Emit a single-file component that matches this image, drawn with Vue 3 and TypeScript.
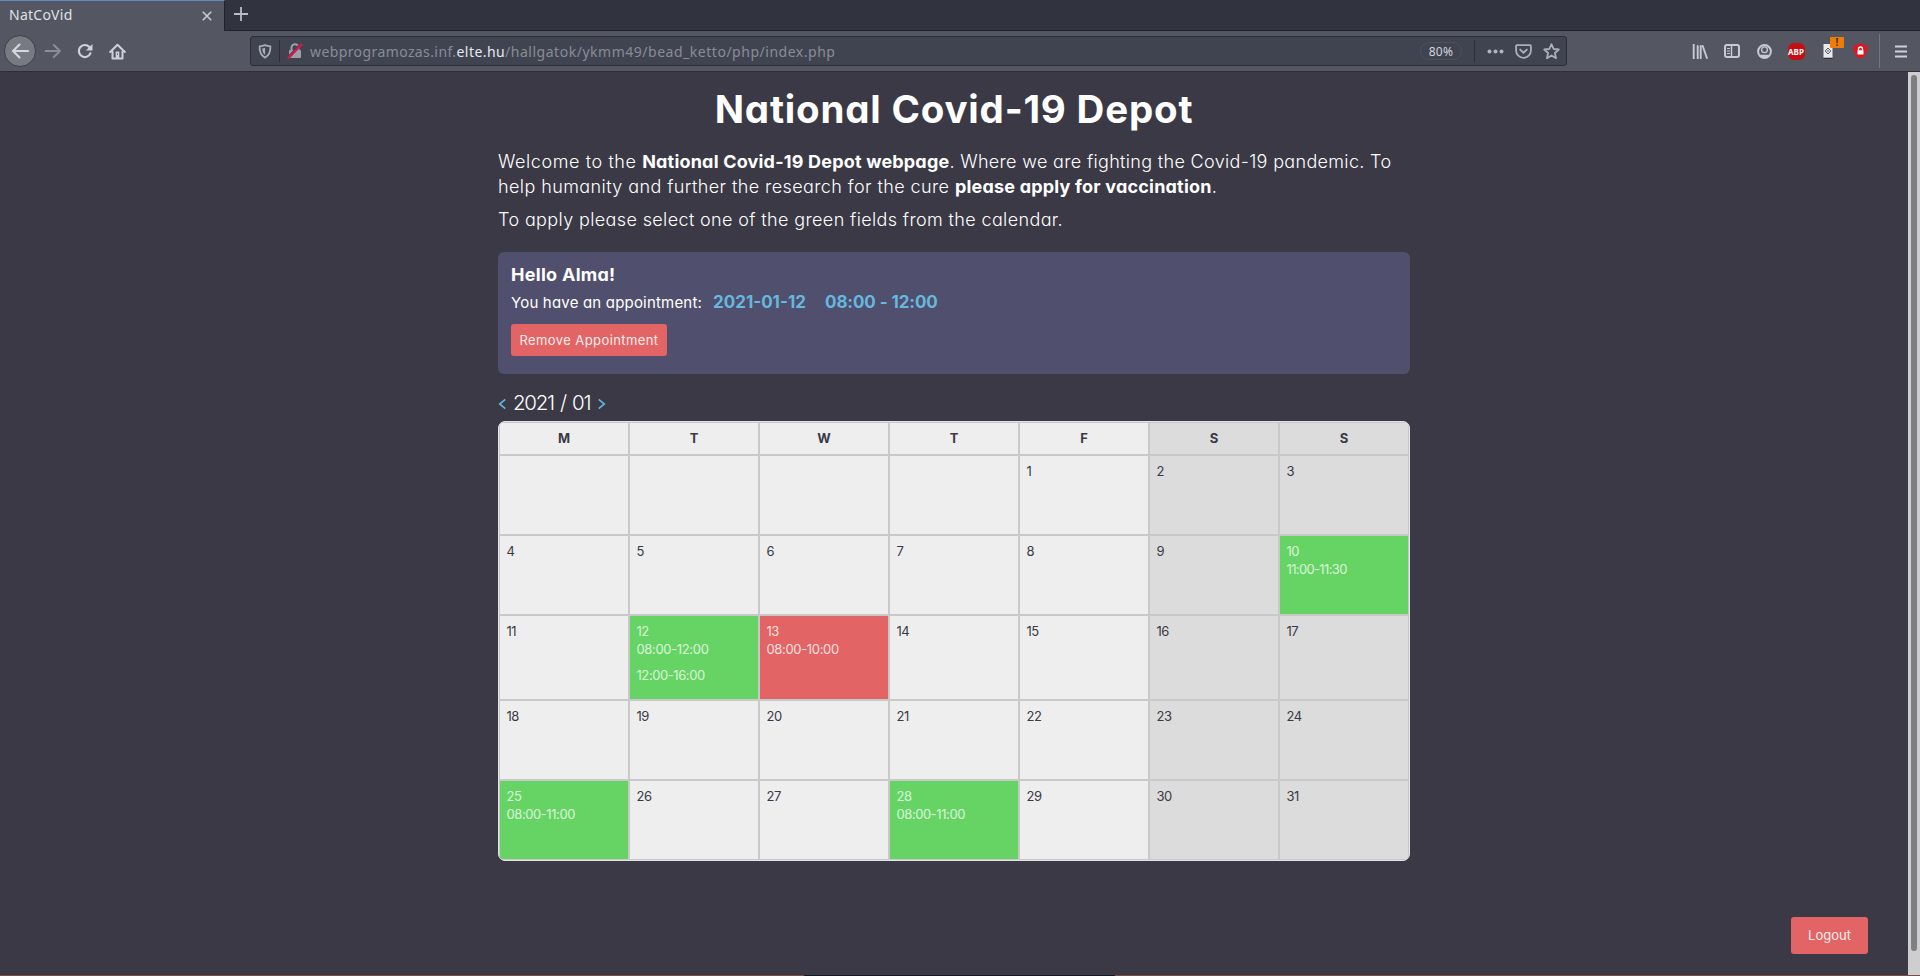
<script setup lang="ts">
interface Cell {
  day: string
  times: { label: string; key: string }[]
  kind: 'plain' | 'weekend' | 'free' | 'full'
}

const weekdays: string[] = ['M', 'T', 'W', 'T', 'F', 'S', 'S']

const slots: Record<number, { kind: 'free' | 'full'; times: string[] }> = {
  10: { kind: 'free', times: ['11:00-11:30'] },
  12: { kind: 'free', times: ['08:00-12:00', '12:00-16:00'] },
  13: { kind: 'full', times: ['08:00-10:00'] },
  25: { kind: 'free', times: ['08:00-11:00'] },
  28: { kind: 'free', times: ['08:00-11:00'] },
}

const FIRST_WEEKDAY = 4
const cells: Cell[] = Array.from({ length: 35 }, (_, i) => {
  const day = i - FIRST_WEEKDAY + 1
  const slot = slots[day]
  return {
    day: day > 0 ? String(day) : '',
    times: (slot?.times ?? []).map((label) => {
      const ones = (label.match(/1/g) ?? []).length
      return { label, key: ones > 3 ? 'tightest' : ones > 1 ? 'tighter' : 'tight' }
    }),
    kind: slot ? slot.kind : i % 7 > 4 ? 'weekend' : 'plain',
  }
})
</script>

<template>
  <div class="window">
    <div class="tabbar">
      <div class="tab">
        <span class="tab-title">NatCoVid</span>
        <svg class="tab-close" width="10" height="10" viewBox="0 0 10 10"><path d="M.8.8l8.4 8.4M9.2.8L.8 9.2" stroke="#c9ccd4" stroke-width="1.6" fill="none" /></svg>
      </div>
      <svg class="tab-new" width="14" height="14" viewBox="0 0 14 14"><path d="M7 0v14M0 7h14" stroke="#b9bcc4" stroke-width="1.800" fill="none" /></svg>
    </div>

    <div class="toolbar">
      <div class="nav">
        <span class="back"><svg width="18" height="16" viewBox="0 0 18 16"><path d="M17 8H2.500M8.500 1.600L2 8l6.500 6.400" fill="none" stroke="#d3d7df" stroke-width="2.100" stroke-linecap="round" stroke-linejoin="round" /></svg></span>
        <span class="slot"><svg width="18" height="16" viewBox="0 0 18 16"><path d="M1.500 8h14M9.800 2L16 8l-6.200 6" fill="none" stroke="#8a8e97" stroke-width="1.900" stroke-linecap="round" stroke-linejoin="round" /></svg></span>
        <span class="slot"><svg width="16" height="16" viewBox="0 0 16 16"><path d="M13.400 10.300A6 6 0 1 1 12.300 4" fill="none" stroke="#cdd1d9" stroke-width="2.200" stroke-linecap="round" /><path d="M15.500 .9v6.600H8.900z" fill="#cdd1d9" /></svg></span>
        <span class="slot"><svg width="17" height="17" viewBox="0 0 17 17"><path d="M1.200 9L8.500 1.700 15.800 9" fill="none" stroke="#cdd1d9" stroke-width="2" stroke-linecap="round" stroke-linejoin="round" /><path d="M3.500 8v7.400h10V8" fill="none" stroke="#cdd1d9" stroke-width="2" stroke-linejoin="round" /><path d="M6.700 8.500h3.600V15H6.700z" fill="#cdd1d9" /><path d="M8 10.500h1v1.300H8z" fill="#545762" /></svg></span>
      </div>

      <div class="urlbar">
        <svg class="shield" width="14" height="15" viewBox="0 0 14 15"><path d="M7 1.200c2 .8 3.700 1 5.400 1.100.2 5.200-1 9-5.400 11.400C2.600 11.300 1.400 7.500 1.600 2.300 3.300 2.200 5 2 7 1.200z" fill="none" stroke="#a9adb7" stroke-width="1.800" stroke-linejoin="round" /><path d="M7.100 3.800v7.200C5.200 9.300 4.300 7.400 4.200 4.500 5.200 4.400 6 4.200 7.100 3.800z" fill="#a9adb7" /></svg>
        <i class="sep"></i>
        <svg class="lock" width="16" height="16" viewBox="0 0 16 16"><path d="M4.500 8V4.700a3.500 3.500 0 0 1 7 0V8" fill="none" stroke="#9b9fa9" stroke-width="2" /><rect x="2" y="7" width="12" height="8" rx="1" fill="#9b9fa9" /><path d="M1.600 13.200L13 1.200" stroke="#404450" stroke-width="1.500" /><path d="M1.600 14.800L14.200 1.600" stroke="#d0194a" stroke-width="2.400" stroke-linecap="round" /></svg>
        <span class="url"><span class="u1">webprogramozas.inf.</span><span class="u2">elte.hu</span><span class="u3">/hallgatok/ykmm49/bead_ketto/php/index.php</span></span>
        <span class="zoom-level">80%</span>
        <i class="sep"></i>
        <svg class="dots" width="17" height="5" viewBox="0 0 17 5"><g fill="#b0b4bd"><circle cx="2.500" cy="2.500" r="2" /><circle cx="8.500" cy="2.500" r="2" /><circle cx="14.500" cy="2.500" r="2" /></g></svg>
        <svg class="pocket" width="17" height="15" viewBox="0 0 17 15"><path d="M1.800 1.200h13.400c.4 0 .7.300.7.700v4.600a7.400 7.400 0 0 1-14.800 0V1.900c0-.4.300-.7.700-.7z" fill="none" stroke="#abafb9" stroke-width="1.800" /><path d="M5.200 5.600l3.300 3.100 3.300-3.100" fill="none" stroke="#abafb9" stroke-width="1.900" stroke-linecap="round" stroke-linejoin="round" /></svg>
        <svg class="star" width="17" height="17" viewBox="0 0 17 17"><path d="M8.500 1.200l2.150 4.800 5.150.5-3.900 3.500 1.150 5.200-4.550-2.700-4.550 2.700L5.100 10 1.200 6.500l5.150-.5z" fill="none" stroke="#abafb9" stroke-width="1.800" stroke-linejoin="round" /></svg>
      </div>

      <div class="tools">
        <span class="slot"><svg width="16" height="15" viewBox="0 0 16 15"><path d="M1.700.5v14M5.700 2v12.500M8.700 2v12.500M10.700 2l4.200 12" stroke="#c6cad3" stroke-width="1.900" fill="none" stroke-linecap="round" /></svg></span>
        <span class="slot"><svg width="16" height="14" viewBox="0 0 16 14"><rect x="1" y="1" width="14" height="12" rx="2" fill="none" stroke="#c6cad3" stroke-width="2" /><path d="M7.500 1v12" stroke="#c6cad3" stroke-width="1.500" /><path d="M3 4.500h3M3 7h3M3 9.500h3" stroke="#c6cad3" stroke-width="1" /></svg></span>
        <span class="slot"><svg width="15" height="15" viewBox="0 0 15 15"><circle cx="7.500" cy="7.500" r="6.400" fill="none" stroke="#c6cad3" stroke-width="2" /><circle cx="7.500" cy="5.800" r="2.900" fill="none" stroke="#c6cad3" stroke-width="1.300" /><path d="M2.500 10.800h10c-1 2-3 3.200-5 3.200s-4-1.200-5-3.200z" fill="#c6cad3" /></svg></span>
        <span class="slot"><span class="abp">ABP</span></span>
        <span class="slot ext"><svg width="10" height="16" viewBox="0 0 10 16"><path d="M.5 1h9v14h-9z" fill="#e9eaec" /><path d="M.5 15.300h9" stroke="#2c2f38" stroke-width="1.200" /><path d="M5 5L7.800 8 5 11 2.200 8z" fill="none" stroke="#585c66" stroke-width="1" /><path d="M4 8h2" stroke="#585c66" /></svg><span class="badge">!</span></span>
        <span class="slot"><svg width="15" height="16" viewBox="0 0 15 16"><path d="M7.500.3c2 1.300 4.300 2 6.900 2.100.4 6-1.300 10.700-6.900 13.300C1.900 13.100.2 8.400.6 2.400 3.200 2.300 5.500 1.600 7.500.3z" fill="#e4141f" /><path d="M5.500 7.500V6a2 2 0 0 1 4 0v1.500" fill="none" stroke="#fff" stroke-width="1.300" /><rect x="4.500" y="7.200" width="6" height="4.300" rx=".5" fill="#fff" /></svg></span>
        <i class="tools-sep"></i>
        <svg class="menu" width="12" height="13" viewBox="0 0 12 13"><path d="M0 1.500h12M0 6.500h12M0 11.500h12" stroke="#cdd1d9" stroke-width="2" /></svg>
      </div>
    </div>

    <div class="viewport">
      <main class="page">
        <h1>National Covid-19 Depot</h1>
        <p class="lead">
          <span class="row"><span class="w1">Welcome to the </span><b class="w2">National Covid-19 Depot webpage</b><span class="w3">. Where we are fighting the Covid-19 pandemic. To</span></span>
          <span class="row"><span class="w4">help humanity and further the research for the cure </span><b class="w5">please apply for vaccination</b>.</span>
        </p>
        <p class="lead"><span class="row w6">To apply please select one of the green fields from the calendar.</span></p>

        <section class="card">
          <h2>Hello Alma!</h2>
          <div class="appointment">
            <span class="label">You have an appointment:</span>
            <b class="date">2021-01-12</b>
            <b class="time">08:00 - 12:00</b>
          </div>
          <button class="remove">Remove Appointment</button>
        </section>

        <div class="month">
          <svg width="8" height="12" viewBox="0 0 8 12"><path d="M7.300 1.300L1.700 6l5.600 4.700" /></svg>
          <span class="month-name">2021 / 01</span>
          <svg width="8" height="12" viewBox="0 0 8 12"><path d="M.7 1.300L6.300 6 .7 10.700" /></svg>
        </div>

        <div class="calendar">
          <div v-for="(d, i) in weekdays" :key="'h' + i" class="head" :class="{ weekend: i > 4 }">{{ d }}</div>
          <div v-for="(c, i) in cells" :key="i" class="cell" :class="c.kind">
            <div class="day">{{ c.day }}</div>
            <div v-for="t in c.times" :key="t.label" class="hours" :class="t.key">{{ t.label }}</div>
          </div>
        </div>
      </main>
      <button class="logout">Logout</button>
      <div class="scrollbar"><div class="thumb"></div></div>
    </div>
    <div class="desktop-edge"><i></i></div>
  </div>
</template>

<style>
html, body { margin: 0; overflow: hidden; background: #3a3945; }
</style>

<style scoped>
* { box-sizing: border-box; }
.window {
  width: 1920px; height: 976px; display: flex; flex-direction: column; position: relative; overflow: hidden;
  font-family: Inter, "Liberation Sans", sans-serif; font-feature-settings: "cv11"; color: #fff; background: #3a3945;
}
svg { display: block; flex: none; }
.tabbar { height: 31px; background: #31343f; border-bottom: 1px solid #20232c; display: flex; align-items: center; flex: none; }
.tab {
  width: 225px; height: 31px; align-self: flex-start; background: #545762; border-top: 1px solid #6189c4; border-right: 1px solid #20232c;
  display: flex; align-items: center; justify-content: space-between; padding: 0 12px 0 9px;
}
.tab-title { font: 14px/20px "Noto Sans", sans-serif; letter-spacing: .25px; color: #dfe2e8; margin-top: -2px; }
.tab-close { margin-top: -1px; }
.tab-new { margin-left: 9px; margin-top: -2px; }

.toolbar { height: 41px; background: #545762; border-bottom: 1px solid #2c2e39; display: flex; align-items: center; flex: none; }
.nav { display: flex; align-items: center; width: 250px; padding-left: 4px; }
.back { width: 32px; height: 32px; border-radius: 50%; background: #777b81; border: 1px solid #3d404a; display: flex; align-items: center; justify-content: center; margin-right: 1px; }
.slot { width: 32px; height: 32px; display: flex; align-items: center; justify-content: center; flex: none; }
.urlbar {
  width: 1317px; height: 30px; background: #404450; border: 1px solid #2b2e39; border-radius: 3px;
  display: flex; align-items: center; padding: 0 6px 0 7px;
}
.sep { width: 1px; height: 22px; background: #2c2f3a; flex: none; }
.shield { margin-right: 7px; }
.lock { margin-left: 7px; }
.url { flex: 1; margin-left: 7px; margin-top: 1px; font: 14px/20px "Noto Sans", sans-serif; color: #888c96; white-space: nowrap; }
.u1 { letter-spacing: .4px; }
.u2 { letter-spacing: .43px; color: #e6e9ef; }
.u3 { letter-spacing: .52px; }
.zoom-level { width: 42px; height: 18px; border: 1px solid #4d515c; border-radius: 9px; font: 12px/17px "Noto Sans", sans-serif; letter-spacing: .3px; text-align: center; color: #d2d6de; margin-right: 12px; }
.dots { margin-left: 12px; margin-right: 11px; }
.pocket { margin-right: 11px; }
.tools { margin-left: auto; display: flex; align-items: center; }
.abp { width: 17px; height: 17px; border-radius: 6px; background: #c70d12; font: 700 8px/17px "Noto Sans", sans-serif; text-align: center; color: #fff; }
.ext { position: relative; }
.badge { position: absolute; left: 18px; top: 2px; width: 14px; height: 11px; background: #f07c05; border-radius: 1px; font: 700 10px/11px "Noto Sans", sans-serif; text-align: center; color: #3c2a14; }
.tools-sep { width: 1px; height: 34px; background: #747780; margin-left: 3px; }
.menu { margin: 0 13px 0 15px; }

.viewport { height: 903px; position: relative; flex: none; }
.page { width: 912px; margin-left: 498px; padding-top: 8px; }
h1 { margin: 0 0 11px; font-size: 38.500px; line-height: 58px; font-weight: 700; letter-spacing: .8px; text-align: center; white-space: nowrap; }
.lead { margin: 0 0 8px; font-size: 18px; font-weight: 350; line-height: 25px; color: #fff; }
.row { display: block; white-space: pre; }
.lead b { font-weight: 700; }
.w1 { letter-spacing: .58px; }
.w2 { letter-spacing: .19px; }
.w3 { letter-spacing: .33px; }
.w4 { letter-spacing: .41px; }
.w5 { letter-spacing: .2px; }
.w6 { letter-spacing: .37px; }
.card { margin-top: 20px; height: 122px; padding: 11px 13px 10px; background: #504f6d; border-radius: 6px; }
h2 { margin: 0; font-size: 18px; line-height: 24px; letter-spacing: .28px; }
.appointment { display: flex; align-items: baseline; height: 28px; margin: 1px 0 8px; line-height: 28px; white-space: nowrap; }
.label { font-size: 15px; letter-spacing: .19px; width: 202px; }
.date, .time { font-size: 17px; color: #67b8de; }
.date { width: 112px; letter-spacing: 0; }
.time { letter-spacing: -.08px; }
button { display: block; border: 0; padding: 0; background: #e26464; color: #fdeeee; font-family: inherit; font-weight: inherit; font-feature-settings: inherit; border-radius: 3px; font-size: 13px; text-align: center; white-space: nowrap; }
.remove { width: 156px; height: 32px; line-height: 31px; letter-spacing: .41px; }
.month { display: flex; align-items: center; margin: 14px 0 3px; height: 30px; }
.month svg { fill: none; stroke: #5fb4dc; stroke-width: 1.700; margin-top: 1px; }
.month svg:last-child { margin-left: 7px; }
.month-name { margin-left: 7px; width: 78px; font-size: 20.500px; font-weight: 350; line-height: 30px; letter-spacing: -1.300px; word-spacing: 1.800px; white-space: nowrap; }
.calendar {
  display: grid; grid-template-columns: repeat(7, 128px); grid-template-rows: 31px 78px 78px 83px 78px 78px; gap: 2px; padding: 1px;
  border: 1px solid #e3e3e5; background: #c9c9ca; border-radius: 7px; overflow: hidden; color: #3a3945; font-size: 13px;
}
.head { background: #eee; text-align: center; font-weight: 700; line-height: 31px; }
.cell { background: #eee; padding: 6px 6px 6px 6.500px; line-height: 19px; }
.weekend { background: #dcdcdc; }
.free { background: #66d465; color: #daf5da; }
.full { background: #e26464; color: #fbe0e0; }
.day { height: 18px; letter-spacing: -.5px; }
.hours { margin-bottom: 7px; white-space: nowrap; }
.tight { letter-spacing: -.34px; }
.tighter { letter-spacing: -.42px; }
.tightest { letter-spacing: -.64px; }
.logout { position: absolute; left: 1791px; top: 845px; width: 77px; height: 37px; line-height: 37px; }
.scrollbar { position: absolute; right: 0; top: 0; width: 12px; height: 903px; background: #cecece; padding: 3px 3px 0; }
.thumb { width: 6px; height: 876px; border-radius: 3px; background: #7e7f80; }
.desktop-edge { height: 1px; background: #7c4b42; display: flex; }
.desktop-edge i { margin-left: 804px; width: 311px; height: 1px; background: #171922; }
</style>
